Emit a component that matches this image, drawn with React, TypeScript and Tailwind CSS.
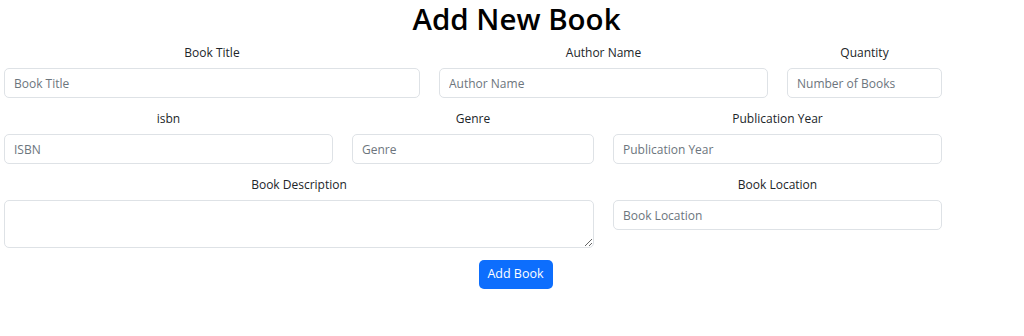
import React from "react";

const inputCls =
  "w-full h-[30px] rounded-[5px] border border-[#dee2e6] bg-white px-[9px] text-[12px] text-[#212529] placeholder:text-[#6c757d] outline-none";

const Field = ({
  label,
  width,
  placeholder,
  focused,
  children,
}: {
  label: string;
  width: string;
  placeholder?: string;
  focused?: boolean;
  children?: React.ReactNode;
}) => (
  <div className={`flex flex-col ${width}`}>
    <label className="h-[18px] mb-[6px] text-center text-[12px] leading-[18px] text-[#212529]">
      {label}
    </label>
    {children ?? (
      <input
        className={focused ? `${inputCls} border-[#b8cdf2]` : inputCls}
        placeholder={placeholder}
      />
    )}
  </div>
);

export default function App() {
  return (
    <div
      className="w-[1024px] h-[336px] bg-white"
      style={{ fontFamily: '"Open Sans", "Noto Sans", sans-serif' }}
    >
      <h1 className="h-[44px] pt-[1px] pl-[9px] text-center text-[29.5px] leading-[36px] font-semibold text-black">
        Add New Book
      </h1>
      <form className="flex flex-col gap-[12px] pl-[4px] w-[942px]">
        <div className="flex gap-[19px]">
          <Field label="Book Title" width="w-[416px]" placeholder="Book Title" focused />
          <Field label="Author Name" width="w-[329px]" placeholder="Author Name" />
          <Field label="Quantity" width="w-[155px]" placeholder="Number of Books" />
        </div>
        <div className="flex gap-[19px]">
          <Field label="isbn" width="w-[329px]" placeholder="ISBN" />
          <Field label="Genre" width="w-[242px]" placeholder="Genre" />
          <Field label="Publication Year" width="w-[329px]" placeholder="Publication Year" />
        </div>
        <div className="flex gap-[19px] items-start">
          <Field label="Book Description" width="w-[590px]">
            <textarea className="w-full h-[48px] rounded-[5px] border border-[#dee2e6] bg-white px-[9px] py-[4px] text-[12px] outline-none block" />
          </Field>
          <Field label="Book Location" width="w-[329px]" placeholder="Book Location" />
        </div>
        <div className="flex justify-center pl-[85px]">
          <button
            type="button"
            className="w-[74px] h-[29px] rounded-[5px] bg-[#0d6efd] text-white text-[12.5px]"
          >
            Add Book
          </button>
        </div>
      </form>
    </div>
  );
}
